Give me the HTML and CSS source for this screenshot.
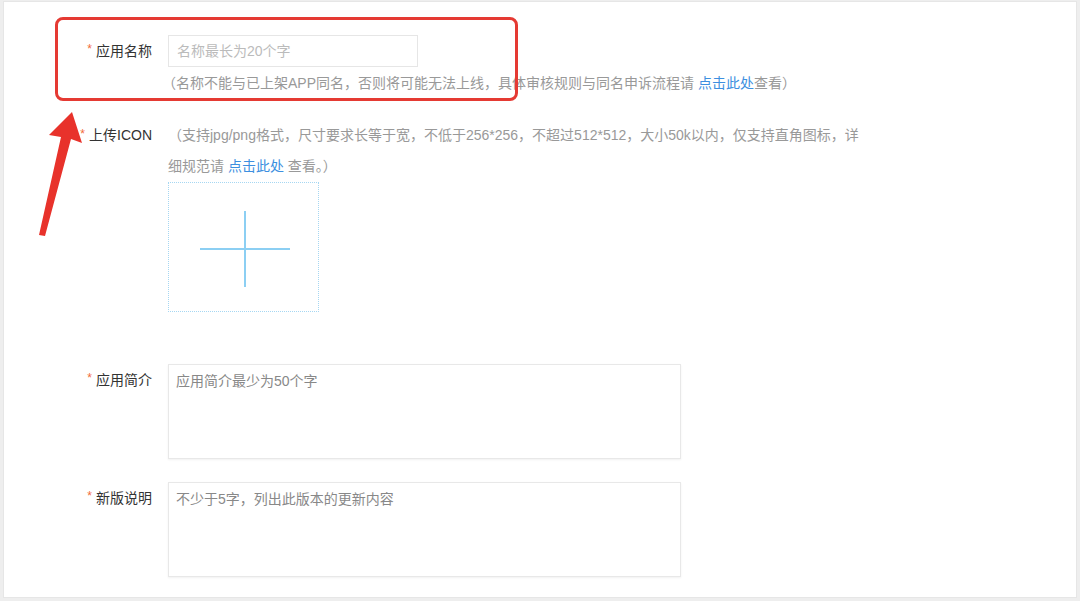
FILE: index.html
```html
<!DOCTYPE html>
<html lang="zh-CN">
<head>
  <meta charset="UTF-8" />
  <meta name="viewport" content="width=device-width, initial-scale=1.0"/>
  <title>应用信息</title>
  <link rel="stylesheet" href="styles.css">
</head>
<body>

  <div class="panel">
    <form class="app-form">

      <div class="form-row row-name">
        <label class="form-label"><span class="req">*</span>应用名称</label>
        <div class="form-field">
          <input type="text" class="name-input" placeholder="名称最长为20个字" />
          <p class="hint">（名称不能与已上架APP同名，否则将可能无法上线，具体审核规则与同名申诉流程请 <a href="#">点击此处</a>查看）</p>
        </div>
      </div>

      <div class="form-row row-icon">
        <label class="form-label"><span class="req">*</span>上传ICON</label>
        <div class="form-field">
          <p class="hint hint-icon">（支持jpg/png格式，尺寸要求长等于宽，不低于256*256，不超过512*512，大小50k以内，仅支持直角图标，详<br>细规范请 <a href="#">点击此处</a> 查看。）</p>
          <div class="upload-box">
            <svg width="92" height="78" viewBox="0 0 92 78">
              <line x1="1" y1="39" x2="91" y2="39" stroke="#8ccff3" stroke-width="2"/>
              <line x1="46" y1="1" x2="46" y2="77" stroke="#8ccff3" stroke-width="2"/>
            </svg>
          </div>
        </div>
      </div>

      <div class="form-row row-desc">
        <label class="form-label"><span class="req">*</span>应用简介</label>
        <div class="form-field">
          <textarea class="text-box" placeholder="应用简介最少为50个字"></textarea>
        </div>
      </div>

      <div class="form-row row-notes">
        <label class="form-label"><span class="req">*</span>新版说明</label>
        <div class="form-field">
          <textarea class="text-box" placeholder="不少于5字，列出此版本的更新内容"></textarea>
        </div>
      </div>

    </form>

    <!-- annotation overlay -->
    <div class="mark-box"></div>
    <svg class="mark-arrow" width="90" height="130" viewBox="0 0 90 130">
      <polygon points="72,2 82,33 71,29 45,126 39,125 61,27 49,25" fill="#e8322b"/>
    </svg>
  </div>

</body>
</html>
```

FILE: styles.css
```css
* { margin: 0; padding: 0; box-sizing: border-box; }

body {
  font-family: "Liberation Sans", "Noto Sans CJK SC", sans-serif;
  font-size: 14px;
  color: #333;
  background: #eeeeee;
  height: 601px;
  padding: 1px 3px 3px 3px;
}

.panel {
  position: relative;
  height: 100%;
  background: #fff;
  border: 1px solid #e6e6e6;
}

.app-form {
  padding-top: 33px;
}

.form-row {
  display: flex;
  align-items: flex-start;
}

.form-label {
  width: 148px;
  margin-right: 16px;
  text-align: right;
  line-height: 32px;
  color: #333;
  flex-shrink: 0;
}

.req {
  color: #f26b3a;
  font-size: 12px;
  margin-right: 4px;
  vertical-align: top;
  line-height: 28px;
}

.name-input {
  width: 250px;
  height: 32px;
  border: 1px solid #e6e6e6;
  padding: 0 8px;
  font-family: inherit;
  font-size: 14px;
  outline: none;
}

.name-input::placeholder {
  color: #bbb;
}

.hint {
  color: #999;
  line-height: 30px;
  margin-top: 1px;
  margin-left: -6px;
}

.hint a {
  color: #3d8fe0;
  text-decoration: none;
}

.row-icon {
  margin-top: 22px;
}

.row-icon .form-label {
  line-height: 31px;
}

.hint-icon {
  line-height: 31px;
  margin: 0;
}

.upload-box {
  width: 151px;
  height: 130px;
  border: 1px dotted #a6d7f2;
  display: flex;
  align-items: center;
  justify-content: center;
  padding: 4px 0 0 2px;
}

.row-desc {
  margin-top: 52px;
}

.row-notes {
  margin-top: 23px;
}

.text-box {
  display: block;
  width: 513px;
  height: 95px;
  border: 1px solid #e8e8e8;
  box-shadow: 0 1px 2px rgba(0,0,0,0.06);
  padding: 7px 7px;
  font-family: inherit;
  font-size: 14px;
  line-height: 18px;
  resize: none;
  outline: none;
}

.text-box::placeholder {
  color: #888;
}

/* annotation */
.mark-box {
  position: absolute;
  left: 51px;
  top: 15px;
  width: 463px;
  height: 84px;
  border: 3px solid #e53a33;
  border-radius: 8px;
}

.mark-arrow {
  position: absolute;
  left: -4px;
  top: 108px;
}
```
